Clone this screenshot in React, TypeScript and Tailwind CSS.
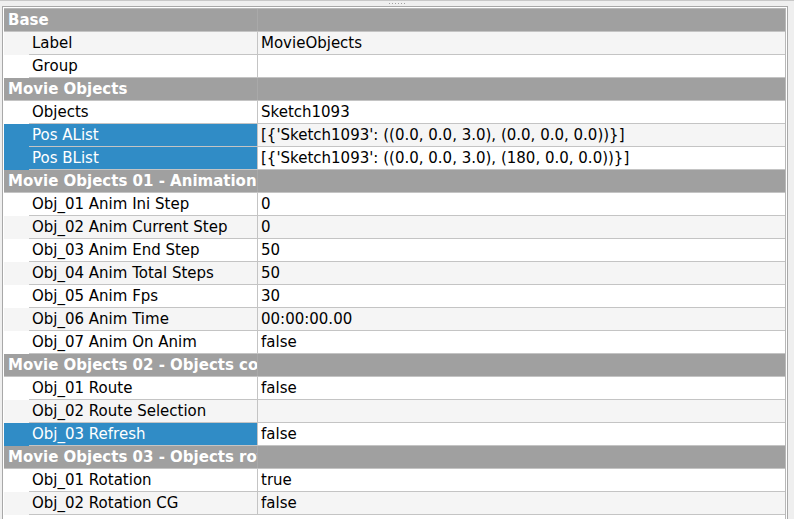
import React from "react"

type Row =
  | { kind: "group"; title: string }
  | { kind: "item"; label: string; value: string; selected?: boolean }

const rows: Row[] = [
  { kind: "group", title: "Base" },
  { kind: "item", label: "Label", value: "MovieObjects" },
  { kind: "item", label: "Group", value: "" },
  { kind: "group", title: "Movie Objects" },
  { kind: "item", label: "Objects", value: "Sketch1093" },
  { kind: "item", label: "Pos AList", value: "[{'Sketch1093': ((0.0, 0.0, 3.0), (0.0, 0.0, 0.0))}]", selected: true },
  { kind: "item", label: "Pos BList", value: "[{'Sketch1093': ((0.0, 0.0, 3.0), (180, 0.0, 0.0))}]", selected: true },
  { kind: "group", title: "Movie Objects 01 - Animation" },
  { kind: "item", label: "Obj_01 Anim Ini Step", value: "0" },
  { kind: "item", label: "Obj_02 Anim Current Step", value: "0" },
  { kind: "item", label: "Obj_03 Anim End Step", value: "50" },
  { kind: "item", label: "Obj_04 Anim Total Steps", value: "50" },
  { kind: "item", label: "Obj_05 Anim Fps", value: "30" },
  { kind: "item", label: "Obj_06 Anim Time", value: "00:00:00.00" },
  { kind: "item", label: "Obj_07 Anim On Anim", value: "false" },
  { kind: "group", title: "Movie Objects 02 - Objects configuration" },
  { kind: "item", label: "Obj_01 Route", value: "false" },
  { kind: "item", label: "Obj_02 Route Selection", value: "" },
  { kind: "item", label: "Obj_03 Refresh", value: "false", selected: true },
  { kind: "group", title: "Movie Objects 03 - Objects rotation" },
  { kind: "item", label: "Obj_01 Rotation", value: "true" },
  { kind: "item", label: "Obj_02 Rotation CG", value: "false" },
]

function GroupRow({ title }: { title: string }) {
  return (
    <div className="flex h-[23px] bg-[#a0a0a0] border-b border-[#c4c4c4]">
      <div className="w-[254px] shrink-0 overflow-hidden whitespace-nowrap border-r border-[#a9a9a9] pl-[4px] flex items-center font-bold text-white">
        {title}
      </div>
      <div className="flex-1" />
    </div>
  )
}

function ItemRow({ label, value, selected, alt }: { label: string; value: string; selected?: boolean; alt: boolean }) {
  const bg = alt ? "bg-[#f5f5f5]" : "bg-white"
  return (
    <div className={`flex h-[23px] ${bg}`}>
      <div className={`w-[25px] shrink-0 ${selected ? "bg-[#308cc6]" : ""}`} />
      <div className="flex flex-1 border-b border-[#c4c4c4]">
        <div
          className={`w-[229px] shrink-0 overflow-hidden whitespace-nowrap border-r border-[#c4c4c4] pl-[3px] flex items-center ${
            selected ? "bg-[#308cc6] text-white" : "text-black"
          }`}
        >
          {label}
        </div>
        <div className="flex-1 overflow-hidden whitespace-nowrap pl-[3px] flex items-center text-black">{value}</div>
      </div>
    </div>
  )
}

export default function App() {
  return (
    <div className="w-[794px] h-[519px] overflow-hidden bg-[#efefef] font-['DejaVu_Sans',sans-serif] text-[15px] leading-none">
      {/* splitter handle */}
      <div className="h-[6px] border-t border-[#c8c8c8] flex justify-center items-start pt-[2px]">
        <div className="flex gap-[2px]">
          {[0, 1, 2, 3, 4, 5].map((i) => (
            <span key={i} className="block w-[1px] h-[1px] bg-[#a0a0a0]" />
          ))}
        </div>
      </div>
      {/* property tree frame */}
      <div className="ml-[2px] w-[786px] h-[513px] border-l border-t border-r border-[#a8a8a8] bg-white pl-[1px] pr-[1px] pt-[1px]">
        <div className="h-full border-t border-r border-[#b8b8b8] bg-white">
          {rows.map((r, i) =>
            r.kind === "group" ? (
              <GroupRow key={i} title={r.title} />
            ) : (
              <ItemRow key={i} label={r.label} value={r.value} selected={r.selected} alt={i % 2 === 1} />
            )
          )}
        </div>
      </div>
    </div>
  )
}
